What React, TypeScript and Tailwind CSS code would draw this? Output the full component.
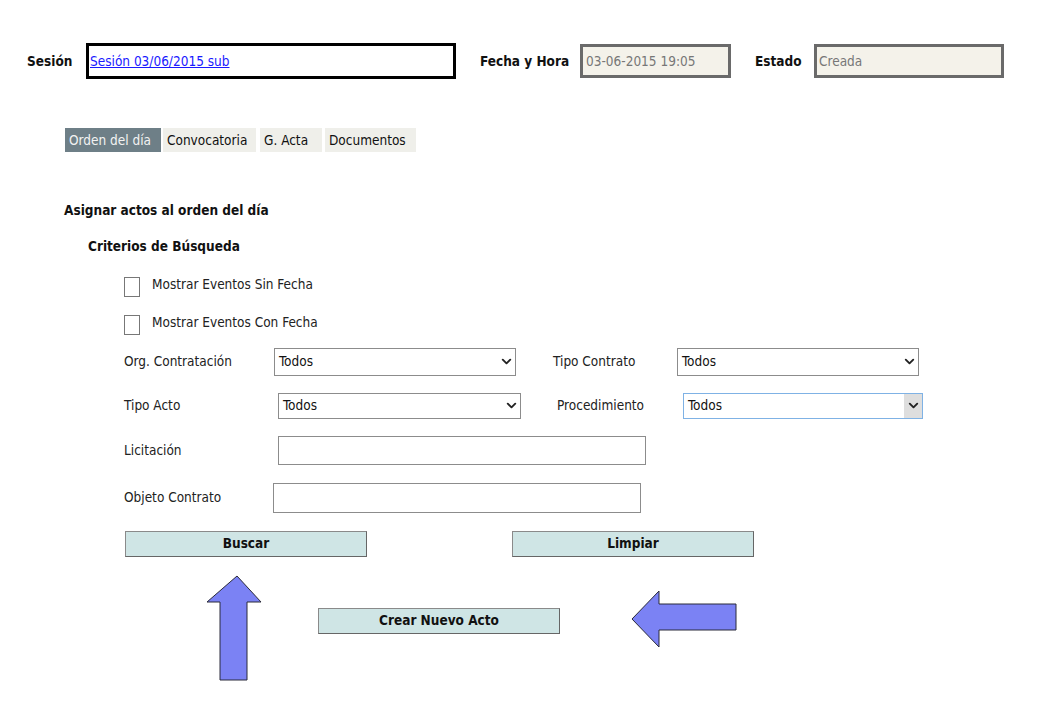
import { ChevronDown } from "lucide-react";

function Select({ className = "", focus = false }: { className?: string; focus?: boolean }) {
  return (
    <div
      className={`flex items-center justify-between bg-white border ${
        focus ? "border-[#7fb2e5]" : "border-[#8c8c8c]"
      } ${className}`}
    >
      <span className="pl-[4px] text-[13.5px] text-[#111]">Todos</span>
      <span className={`flex h-full w-[18px] items-center justify-center ${focus ? "bg-[#dedede]" : ""}`}>
        <ChevronDown size={15} strokeWidth={3} className="text-[#222]" />
      </span>
    </div>
  );
}

function Checkbox({ label }: { label: string }) {
  return (
    <div className="flex items-start gap-[12px]">
      <div className="mt-[3px] h-[20px] w-[16px] border border-[#777] bg-white" />
      <span className="text-[13.5px] text-[#222]">{label}</span>
    </div>
  );
}

function Button({ label, className = "" }: { label: string; className?: string }) {
  return (
    <div
      className={`flex h-[26px] w-[242px] items-center justify-center border border-[#8a8a8a] border-b-[#666] border-r-[#666] bg-[#cfe5e5] text-[13.5px] font-bold text-[#111] ${className}`}
    >
      {label}
    </div>
  );
}

export default function App() {
  const tabs = [
    { label: "Orden del día", cls: "w-[96px]", active: true },
    { label: "Convocatoria", cls: "ml-[2px] w-[93px]", active: false },
    { label: "G. Acta", cls: "ml-[4px] w-[62px]", active: false },
    { label: "Documentos", cls: "ml-[3px] w-[91px]", active: false },
  ];

  return (
    <div className="relative h-[720px] w-[1040px] overflow-hidden bg-white font-['DejaVu_Sans_Condensed','DejaVu_Sans',sans-serif] text-[#111]">
      {/* Cabecera sesión */}
      <div className="flex items-center pl-[27px] pt-[43px]">
        <span className="w-[59px] text-[13.5px] font-bold">Sesión</span>
        <div className="flex h-[36px] w-[370px] items-start border-[3px] border-black bg-white pl-[1px] pt-[5px]">
          <a className="text-[13.5px] text-[#1a1aff] underline">Sesión 03/06/2015 sub</a>
        </div>
        <span className="ml-[24px] w-[100px] text-[13.5px] font-bold">Fecha y Hora</span>
        <div className="flex h-[34px] w-[151px] items-center border-[3px] border-[#6a6a6a] bg-[#f4f2ea] pl-[3px] text-[13.5px] text-[#777]">
          03-06-2015 19:05
        </div>
        <span className="ml-[24px] w-[59px] text-[13.5px] font-bold">Estado</span>
        <div className="flex h-[34px] w-[190px] items-center border-[3px] border-[#6a6a6a] bg-[#f4f2ea] pl-[2px] text-[13.5px] text-[#777]">
          Creada
        </div>
      </div>

      {/* Pestañas */}
      <div className="mt-[49px] flex pl-[65px]">
        {tabs.map((t) => (
          <div
            key={t.label}
            className={`flex h-[24px] ${t.cls} items-center pl-[4px] text-[13.5px] ${
              t.active ? "bg-[#6e7f87] text-[#f2f2f2]" : "bg-[#efefea] text-[#111]"
            }`}
          >
            {t.label}
          </div>
        ))}
      </div>

      <div className="mt-[48px] pl-[64px] text-[13.5px] font-bold">Asignar actos al orden del día</div>
      <div className="mt-[16px] pl-[88px] text-[13.5px] font-bold">Criterios de Búsqueda</div>

      {/* Criterios */}
      <div className="flex flex-col gap-[15px] pl-[124px] pt-[17px]">
        <Checkbox label="Mostrar Eventos Sin Fecha" />
        <Checkbox label="Mostrar Eventos Con Fecha" />
      </div>

      <div className="mt-[13px] flex items-center pl-[124px]">
        <span className="w-[150px] text-[13.5px] text-[#222]">Org. Contratación</span>
        <Select className="h-[28px] w-[242px]" />
        <span className="ml-[37px] w-[124px] text-[13.5px] text-[#222]">Tipo Contrato</span>
        <Select className="h-[28px] w-[242px]" />
      </div>

      <div className="mt-[17px] flex items-center pl-[124px]">
        <span className="w-[154px] text-[13.5px] text-[#222]">Tipo Acto</span>
        <Select className="h-[26px] w-[243px]" />
        <span className="ml-[36px] w-[126px] text-[13.5px] text-[#222]">Procedimiento</span>
        <Select focus className="h-[26px] w-[240px]" />
      </div>

      <div className="mt-[17px] flex items-center pl-[124px]">
        <span className="w-[154px] text-[13.5px] text-[#222]">Licitación</span>
        <div className="h-[29px] w-[368px] border border-[#8c8c8c] bg-white" />
      </div>

      <div className="mt-[18px] flex items-center pl-[124px]">
        <span className="w-[149px] text-[13.5px] text-[#222]">Objeto Contrato</span>
        <div className="h-[30px] w-[368px] border border-[#8c8c8c] bg-white" />
      </div>

      <div className="mt-[18px] flex pl-[125px]">
        <Button label="Buscar" />
        <Button label="Limpiar" className="ml-[145px]" />
      </div>

      <div className="mt-[51px] flex pl-[318px]">
        <Button label="Crear Nuevo Acto" />
      </div>

      {/* Flechas indicativas */}
      <svg className="absolute left-[205px] top-[574px]" width="58" height="108" viewBox="0 0 58 108">
        <polygon
          points="32,2 56,28 42,28 42,106 15,106 15,28 2,28"
          fill="#7b82f4"
          stroke="#2a2a3a"
          strokeWidth="1"
        />
      </svg>
      <svg className="absolute left-[630px] top-[589px]" width="108" height="60" viewBox="0 0 108 60">
        <polygon
          points="2,30 29,2 29,15 106,15 106,41 29,41 29,58"
          fill="#7b82f4"
          stroke="#2a2a3a"
          strokeWidth="1"
        />
      </svg>
    </div>
  );
}
